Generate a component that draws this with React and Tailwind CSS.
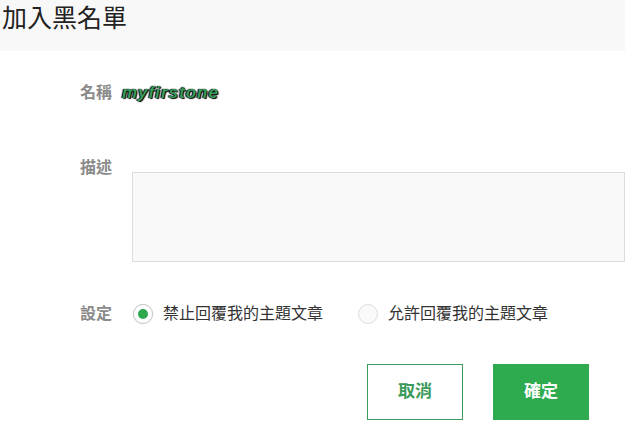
import React from "react";

const font = { fontFamily: '"Liberation Sans", "Noto Sans CJK TC", sans-serif' };

export default function App() {
  return (
    <div className="w-[625px] h-[434px] bg-white overflow-hidden" style={font}>
      <div className="h-[51px] bg-[#f8f8f8] pl-[2px] pt-[3px]">
        <h1 className="text-[25px] leading-[30px] text-[#222]">加入黑名單</h1>
      </div>
      <div className="pl-[80px]">
        <div className="flex items-center h-[20px] mt-[32px]">
          <span className="w-[42px] text-[16px] font-bold text-[#8a8a8a]">名稱</span>
          <span className="text-[17px] font-bold italic text-[#3a9a5a] tracking-[1px] [text-shadow:0_0_1px_#000,1px_1px_1px_#000,-1px_0_1px_#000]">myfirstone</span>
        </div>
        <div className="flex mt-[54px]">
          <span className="w-[53px] text-[16px] font-bold text-[#8a8a8a] leading-[22px]">描述</span>
          <div className="mt-[15px] w-[500px] h-[90px] bg-[#f9f9f9] border border-[#dcdcdc]"></div>
        </div>
        <div className="flex items-center mt-[41px] h-[22px]">
          <span className="w-[53px] text-[16px] font-bold text-[#8a8a8a]">設定</span>
          <div className="w-[20px] h-[20px] rounded-full border border-[#c8c8c8] bg-white flex items-center justify-center shadow-[0_0_1px_rgba(0,0,0,0.15)]">
            <div className="w-[10px] h-[10px] rounded-full bg-[#2ea84f]"></div>
          </div>
          <span className="ml-[10px] text-[16px] text-[#333]">禁止回覆我的主題文章</span>
          <div className="ml-[35px] w-[20px] h-[20px] rounded-full border border-[#dedede] bg-[#fafafa]"></div>
          <span className="ml-[10px] text-[16px] text-[#333]">允許回覆我的主題文章</span>
        </div>
        <div className="flex mt-[39px] ml-[287px] gap-[30px]">
          <button className="w-[96px] h-[56px] border border-[#3a9a5a] bg-white text-[#3a9a5a] text-[17px] font-bold">取消</button>
          <button className="w-[96px] h-[56px] bg-[#2eaa4f] text-white text-[17px] font-bold">確定</button>
        </div>
      </div>
    </div>
  );
}
